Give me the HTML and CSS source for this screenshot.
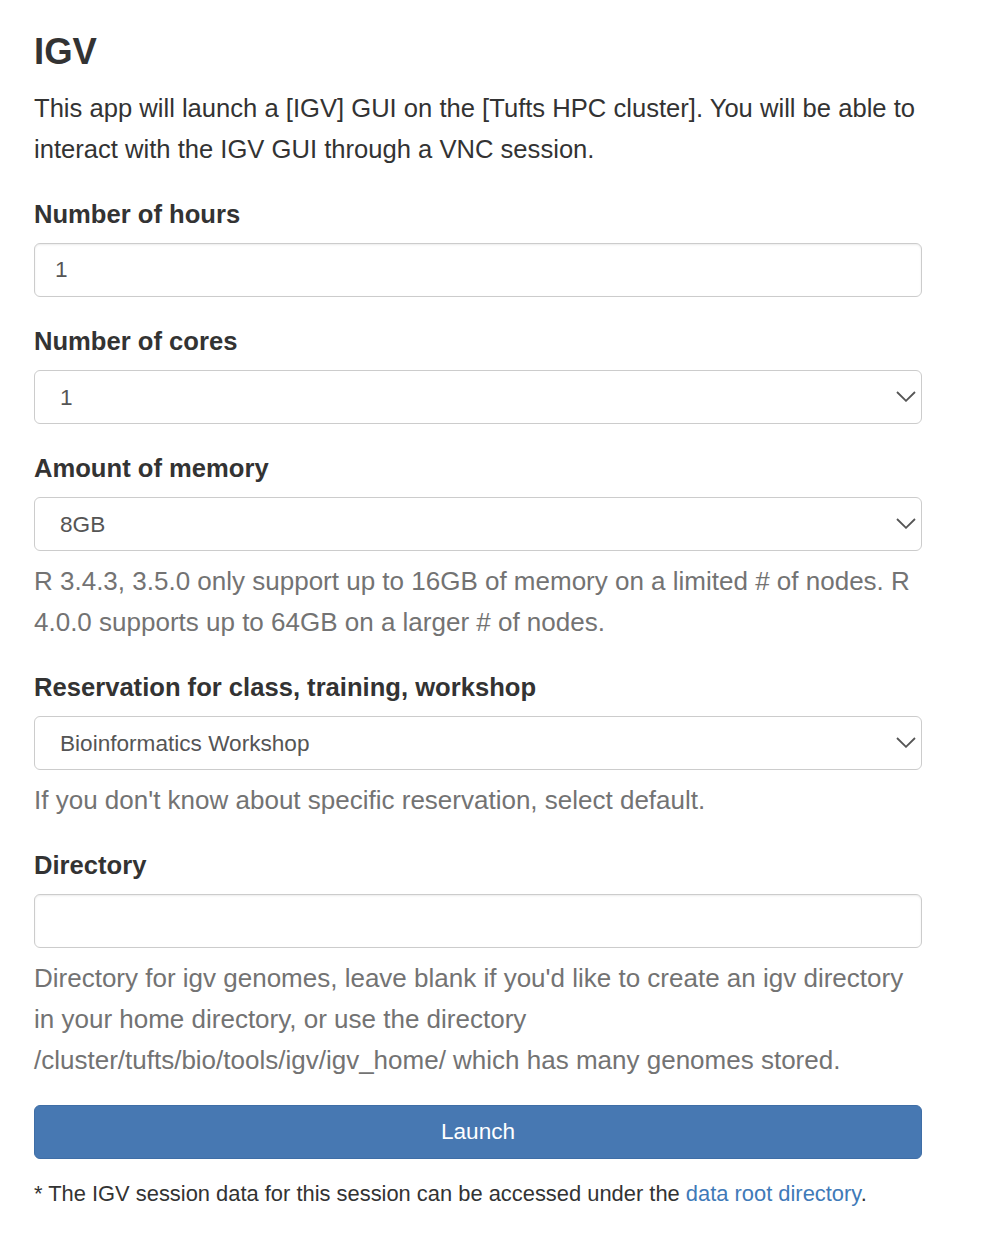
FILE: index.html
```html
<!DOCTYPE html>
<html lang="en">
<head>
<meta charset="utf-8">
<title>IGV</title>
<link rel="stylesheet" href="styles.css">
</head>
<body>
<main class="page">
  <h1 class="title">IGV</h1>
  <p class="intro">This app will launch a [IGV] GUI on the [Tufts HPC cluster]. You will be able to interact with the IGV GUI through a VNC session.</p>

  <form class="form">
    <div class="group">
      <label class="label" for="hours">Number of hours</label>
      <input class="control" id="hours" type="text" value="1">
    </div>

    <div class="group">
      <label class="label" for="cores">Number of cores</label>
      <div class="select-wrap">
        <select class="control select" id="cores"><option>1</option></select>
        <svg class="chevron" width="20" height="11" viewBox="0 0 20 11"><path d="M1 1 L10 9.8 L19 1" fill="none" stroke="#555" stroke-width="1.8"/></svg>
      </div>
    </div>

    <div class="group">
      <label class="label" for="mem">Amount of memory</label>
      <div class="select-wrap">
        <select class="control select" id="mem"><option>8GB</option></select>
        <svg class="chevron" width="20" height="11" viewBox="0 0 20 11"><path d="M1 1 L10 9.8 L19 1" fill="none" stroke="#555" stroke-width="1.8"/></svg>
      </div>
      <p class="help">R 3.4.3, 3.5.0 only support up to 16GB of memory on a limited # of nodes. R 4.0.0 supports up to 64GB on a larger # of nodes.</p>
    </div>

    <div class="group">
      <label class="label" for="res">Reservation for class, training, workshop</label>
      <div class="select-wrap">
        <select class="control select" id="res"><option>Bioinformatics Workshop</option></select>
        <svg class="chevron" width="20" height="11" viewBox="0 0 20 11"><path d="M1 1 L10 9.8 L19 1" fill="none" stroke="#555" stroke-width="1.8"/></svg>
      </div>
      <p class="help">If you don't know about specific reservation, select default.</p>
    </div>

    <div class="group">
      <label class="label" for="dir">Directory</label>
      <input class="control" id="dir" type="text" value="">
      <p class="help">Directory for igv genomes, leave blank if you'd like to create an igv directory in your home directory, or use the directory /cluster/tufts/bio/tools/igv/igv_home/ which has many genomes stored.</p>
    </div>

    <button class="launch" type="button">Launch</button>
  </form>

  <p class="footnote">* The IGV session data for this session can be accessed under the <a class="link" href="#">data root directory</a>.</p>
</main>
</body>
</html>
```

FILE: styles.css
```css
html, body {
  margin: 0;
  padding: 0;
  background: #fff;
}

body {
  font-family: "Liberation Sans", Arial, Helvetica, sans-serif;
  color: #333;
}

.page {
  width: 888px;
  margin-left: 34px;
  padding-top: 32px;
}

.title {
  margin: 0;
  font-size: 36.5px;
  line-height: 40px;
  font-weight: bold;
  color: #333;
}

.intro {
  margin: 16px 0 0 0;
  font-size: 25.6px;
  line-height: 41px;
}

.form {
  margin-top: 24px;
  display: flex;
  flex-direction: column;
  gap: 24px;
}

.group {
  display: flex;
  flex-direction: column;
}

.label {
  display: block;
  font-size: 25.6px;
  line-height: 41px;
  font-weight: bold;
  color: #333;
  margin-bottom: 8px;
}

.control {
  box-sizing: border-box;
  width: 100%;
  height: 54px;
  margin: 0;
  padding: 0 20px;
  font-family: "Liberation Sans", Arial, Helvetica, sans-serif;
  font-size: 22.6px;
  color: #555;
  background: #fff;
  border: 1px solid #ccc;
  border-radius: 6px;
  box-shadow: inset 0 1px 2px rgba(0, 0, 0, 0.075);
  outline: none;
}

.select-wrap {
  position: relative;
}

.select {
  -webkit-appearance: none;
  appearance: none;
  padding-left: 25px;
  padding-right: 50px;
  box-shadow: none;
}

.chevron {
  position: absolute;
  right: 6px;
  top: 21px;
  pointer-events: none;
}

.help {
  margin: 10px 0 0 0;
  font-size: 26px;
  line-height: 41px;
  color: #737373;
}

.launch {
  box-sizing: border-box;
  width: 100%;
  height: 54px;
  margin-top: 0;
  padding: 0;
  font-family: "Liberation Sans", Arial, Helvetica, sans-serif;
  font-size: 22.6px;
  color: #fff;
  background: #4778b2;
  border: 1px solid #3f6ea6;
  border-radius: 6px;
}

.footnote {
  margin: 19px 0 0 0;
  font-size: 21.9px;
  line-height: 31px;
  color: #333;
}

.link {
  color: #3f7ab8;
  text-decoration: none;
}
```
